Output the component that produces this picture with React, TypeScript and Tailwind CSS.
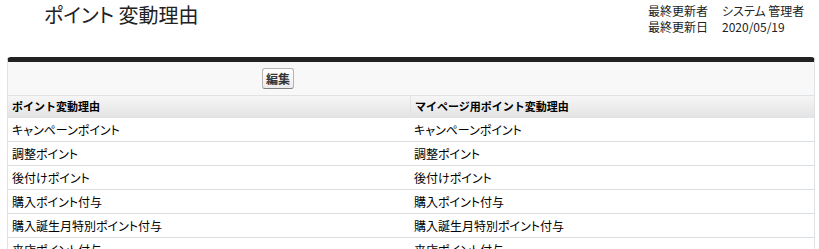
import React from "react";

const rows = [
  ["キャンペーンポイント", "キャンペーンポイント"],
  ["調整ポイント", "調整ポイント"],
  ["後付けポイント", "後付けポイント"],
  ["購入ポイント付与", "購入ポイント付与"],
  ["購入誕生月特別ポイント付与", "購入誕生月特別ポイント付与"],
  ["来店ポイント付与", "来店ポイント付与"],
];

export default function App() {
  return (
    <div className="w-[819px] h-[249px] overflow-hidden bg-white text-black font-['Noto_Sans_CJK_JP','Noto_Sans',sans-serif]">
      <div className="flex items-start h-[57px]">
        <h1 className="ml-[44px] mt-[2px] text-[20px] leading-[26px] font-normal text-[#222] [font-feature-settings:'palt']">
          ポイント 変動理由
        </h1>
        <div className="ml-auto w-[171px] mt-[3px] grid grid-cols-[74px_auto] content-start text-[12px] leading-[16px] text-[#222] [font-feature-settings:'palt']">
          <span>最終更新者</span>
          <span>システム 管理者</span>
          <span>最終更新日</span>
          <span>2020/05/19</span>
        </div>
      </div>
      <div className="ml-[7px] w-[808px] rounded-t-[4px] border-t-[5px] border-t-[#222] border-x border-x-[#e0e3e5]">
        <div className="h-[33px] bg-[#f8f8f8] flex items-start">
          <button className="ml-[254px] mt-[6px] h-[21px] w-[32px] rounded-[3px] border border-[#b5b5b5] border-b-[#7f7f7f] bg-gradient-to-b from-white to-[#ececec] text-[12px] leading-[19px] font-bold text-[#333] flex items-center justify-center">
            編集
          </button>
        </div>
        <div className="grid grid-cols-[402px_1fr] h-[23px] border-y border-[#e0e3e5] bg-gradient-to-b from-[#f6f6f6] to-[#e4e4e4] text-[11px] font-bold">
          <div className="pl-[4px] flex items-center">ポイント変動理由</div>
          <div className="pl-[4px] flex items-center border-l border-[#e0e3e5]">マイページ用ポイント変動理由</div>
        </div>
        {rows.map(([a, b], i) => (
          <div
            key={i}
            className="grid grid-cols-[402px_1fr] h-[24px] border-b border-[#dbdfe1] bg-white text-[12px] [font-feature-settings:'palt']"
          >
            <div className="pl-[4px] flex items-center">{a}</div>
            <div className="pl-[4px] flex items-center">{b}</div>
          </div>
        ))}
      </div>
    </div>
  );
}
